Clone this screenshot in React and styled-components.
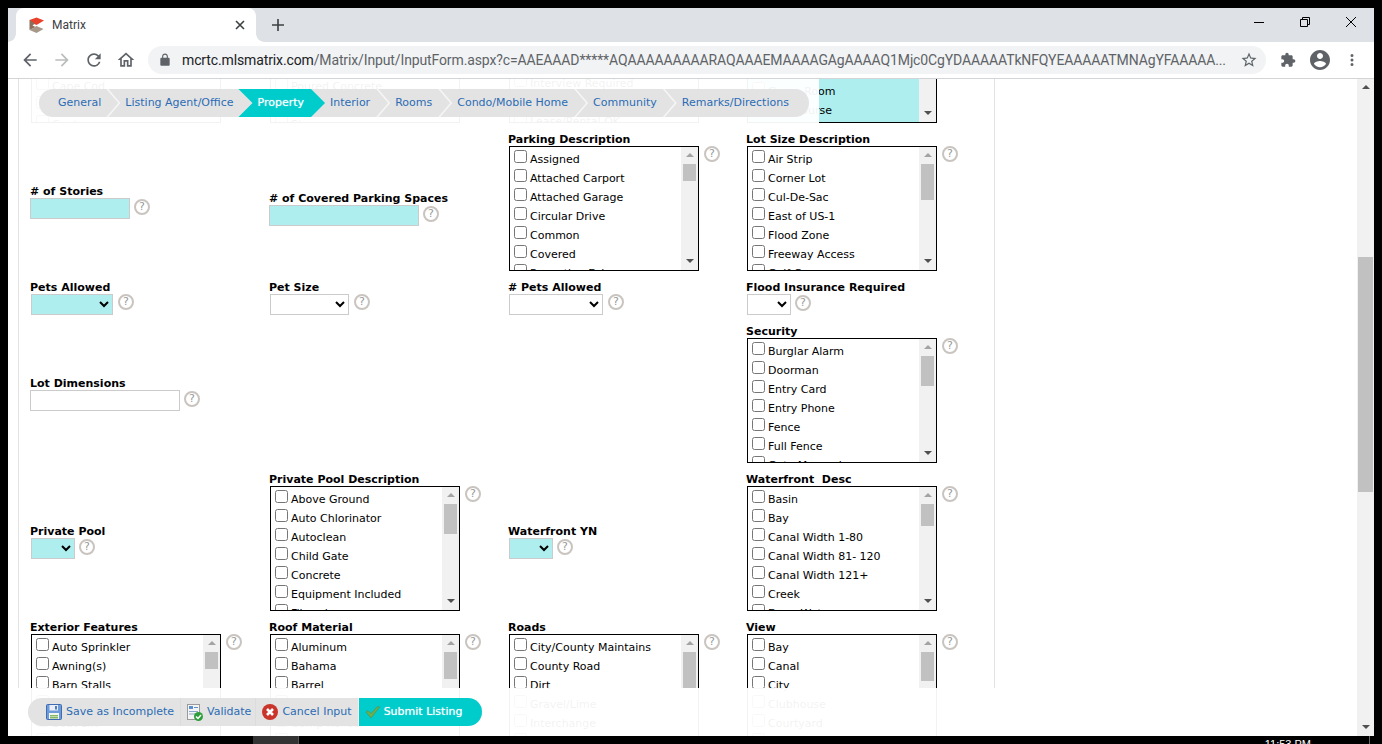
import React from 'react';
import styled, { createGlobalStyle } from 'styled-components';

const GlobalStyle = createGlobalStyle`
  html, body { margin: 0; padding: 0; background: #000; overflow: hidden; }
  * { box-sizing: border-box; }
`;

const Screen = styled.div`
  width: 1382px;
  height: 744px;
  background: #000;
  display: flex;
  flex-direction: column;
  overflow: hidden;
`;

const BrowserWindow = styled.div`
  margin: 8px 8px 0;
  height: 728px;
  display: flex;
  flex-direction: column;
  background: #fff;
`;

// ---- browser chrome ----
const TabStrip = styled.div`
  height: 34px;
  flex: none;
  background: #dee1e6;
  display: flex;
  padding-left: 8px;
`;

const Tab = styled.div`
  position: relative;
  width: 240px;
  background: #fff;
  border-radius: 8px 8px 0 0;
  display: flex;
  align-items: center;
  padding: 0 11px 0 13px;
  font: 12px Roboto, "Liberation Sans", sans-serif;
  color: #3c4043;

  &::before,
  &::after {
    content: '';
    position: absolute;
    bottom: 0;
    width: 8px;
    height: 8px;
  }
  &::before {
    right: 100%;
    background: radial-gradient(circle at 0 0, #dee1e6 7.5px, #fff 8px);
  }
  &::after {
    left: 100%;
    background: radial-gradient(circle at 100% 0, #dee1e6 7.5px, #fff 8px);
  }
`;

const TabTitle = styled.span`
  flex: 1;
  margin-left: 8px;
`;

const NewTab = styled.div`
  width: 28px;
  margin-left: 8px;
  display: flex;
  align-items: center;
  justify-content: center;
`;

const WindowControls = styled.div`
  margin-left: auto;
  display: flex;
`;

const WindowButton = styled.div`
  width: 46px;
  height: 18px;
  padding-top: 9px;
  display: flex;
  justify-content: center;
`;

const Toolbar = styled.div`
  height: 37px;
  flex: none;
  background: #fff;
  border-bottom: 1px solid #d3d4d6;
  display: flex;
  align-items: flex-start;
  padding: 4px 6px 0;
`;

const ToolIcon = styled.div`
  width: 32px;
  height: 28px;
  flex: none;
  display: flex;
  align-items: center;
  justify-content: center;
`;

const Omnibox = styled.div`
  flex: 1;
  min-width: 0;
  height: 28px;
  margin: 0 6px;
  background: #f1f3f4;
  border-radius: 14px;
  display: flex;
  align-items: center;
  padding: 0 8px 0 10px;
  font: 14px Roboto, "Liberation Sans", sans-serif;
  color: #5f6368;
  white-space: nowrap;
`;

const UrlText = styled.div`
  flex: 1;
  min-width: 0;
  margin-left: 10px;
  overflow: hidden;
  letter-spacing: -0.125px;
`;

const UrlHost = styled.span`
  color: #202124;
`;

// ---- page ----
const Content = styled.div`
  flex: 1;
  min-height: 0;
  display: flex;
`;

const PageArea = styled.div`
  position: relative;
  flex: 1;
  overflow: hidden;
  background: #fff;
`;

const PageScrollbar = styled.div`
  width: 17px;
  flex: none;
  background: #f1f1f1;
  display: flex;
  flex-direction: column;
  align-items: center;
  padding: 6px 0 7px;
`;

const PageThumb = styled.div`
  width: 15px;
  height: 235px;
  margin-top: 168px;
  margin-bottom: auto;
  background: #c1c1c1;
`;

const Arrow = styled.div`
  width: 0;
  height: 0;
  flex: none;
  border-left: 4px solid transparent;
  border-right: 4px solid transparent;
  ${(p) => (p.$down
    ? `border-top: 4px solid ${p.$color || '#505050'};`
    : `border-bottom: 4px solid ${p.$color || '#505050'};`)}
`;

const FormPanel = styled.div`
  width: 977px;
  margin: -94px 0 0 10px;
  border-left: 1px solid #e2e2e2;
  border-right: 1px solid #e2e2e2;
  padding-left: 11px;
  font: 11px "DejaVu Sans", Verdana, sans-serif;
  color: #000;
`;

const FormGrid = styled.div`
  display: grid;
  grid-template-columns: 239px 239px 238px 239px;
  row-gap: 10px;
  align-items: center;
`;

const Field = styled.div`
  display: flex;
  flex-direction: column;
  margin-top: ${(p) => p.$drop || 0}px;
`;

const Label = styled.div`
  font-weight: bold;
  line-height: 13px;
  height: 13px;
  white-space: nowrap;
`;

const ControlRow = styled.div`
  display: flex;
  align-items: flex-start;
  gap: ${(p) => p.$gap || 5}px;
`;

const Help = styled.span`
  flex: none;
  width: 16px;
  height: 16px;
  margin-top: ${(p) => p.$top || 0}px;
  border: 2px solid #c9c4bf;
  border-radius: 50%;
  color: #999;
  font: 11px/12px "DejaVu Sans", sans-serif;
  text-align: center;
`;

const TextInput = styled.input`
  width: ${(p) => p.$width}px;
  height: 21px;
  padding: 0;
  border: 1px solid #cbcbcb;
  background: ${(p) => (p.$required ? '#afeeee' : '#fff')};
`;

const Select = styled.select`
  width: ${(p) => p.$width}px;
  height: 21px;
  margin-left: 1px;
  border: 1px solid #cbcbcb;
  border-radius: 0;
  background-color: ${(p) => (p.$required ? '#afeeee' : '#fff')};
  font: 11px "DejaVu Sans", sans-serif;
`;

const ListBox = styled.div`
  width: 190px;
  height: 125px;
  margin-left: 1px;
  border: 1px solid #000;
  display: flex;
  overflow: hidden;
  background: ${(p) => (p.$required ? '#afeeee' : '#fff')};
`;

const ListBody = styled.div`
  flex: 1;
  min-width: 0;
  padding-top: 3px;
  margin-top: ${(p) => -(p.$scroll || 0)}px;
`;

const ListItem = styled.label`
  display: flex;
  align-items: flex-start;
  height: 19px;
  line-height: 19px;
  white-space: nowrap;
`;

const Check = styled.input.attrs({ type: 'checkbox' })`
  width: 13px;
  height: 13px;
  margin: 0 3px 0 4px;
  flex: none;
`;

const ListScroll = styled.div`
  width: 17px;
  flex: none;
  background: #f1f1f1;
  display: flex;
  flex-direction: column;
  align-items: center;
  padding: 6px 0 7px;
`;

const ListThumb = styled.div`
  width: 13px;
  height: ${(p) => p.$size}px;
  margin-top: ${(p) => (p.$low ? 'auto' : '7px')};
  margin-bottom: auto;
  background: #c1c1c1;
`;

// ---- floating bars ----
const TopFade = styled.div`
  position: absolute;
  top: 0;
  left: 11px;
  width: 800px;
  height: 44px;
  padding: 10px 0 0 20px;
  background: rgba(255, 255, 255, 0.95);
`;

const NavPill = styled.div`
  display: inline-flex;
  height: 28px;
  background: #e3e3e3;
  border-radius: 14px;
  font: 11px/28px "DejaVu Sans", Verdana, sans-serif;
`;

const navRightPad = (p) => {
  if (p.$first || p.$beforeActive) return 19;
  return p.$active ? 21 : 20;
};

const NavItem = styled.div`
  position: relative;
  padding: 0 ${navRightPad}px 0 ${(p) => (p.$first ? 19 : 5)}px;
  color: ${(p) => (p.$active ? '#fff' : '#2b6cb5')};
  white-space: nowrap;
  ${(p) => p.$active && 'text-shadow: 0 0 1px rgba(255, 255, 255, 0.7);'}

  &::after {
    content: '';
    position: absolute;
    top: 0;
    bottom: 0;
    display: ${(p) => (p.$last || p.$beforeActive ? 'none' : 'block')};
    ${(p) => (p.$active
    ? `left: -14px; right: 0; z-index: 0; background: #00cccc;
       clip-path: polygon(0 0, calc(100% - 14px) 0, 100% 50%, calc(100% - 14px) 100%, 0 100%, 14px 50%);`
    : `right: 0; width: 14px; background: #f6f6f6;
       clip-path: polygon(0 0, 2px 0, 100% 50%, 2px 100%, 0 100%, calc(100% - 2px) 50%);`)}
  }
`;

const NavText = styled.span`
  position: relative;
  z-index: 1;
`;

const BottomFade = styled.div`
  position: absolute;
  left: 0;
  right: 0;
  bottom: 0;
  height: 48px;
  padding: 10px 0 0 20px;
  background: rgba(255, 255, 255, 0.95);
`;

const ActionPill = styled.div`
  display: inline-flex;
  height: 28px;
  background: #e3e3e3;
  border-radius: 14px;
  font: 11px/28px "DejaVu Sans", Verdana, sans-serif;
`;

const Action = styled.div`
  display: flex;
  align-items: center;
  gap: 4px;
  padding: 0 ${(p) => p.$right || 6}px 0 ${(p) => p.$left || 6}px;
  color: #2b6cb5;
  white-space: nowrap;
  border-right: ${(p) => (p.$plain ? 'none' : '1px solid #dcdcdc')};
`;

const SubmitAction = styled.div`
  display: flex;
  align-items: center;
  gap: 4px;
  margin-left: 1px;
  padding: 0 20px 0 6px;
  border-radius: 0 14px 14px 0;
  background: #00cccc;
  box-shadow: -1px 0 0 #fff;
  color: #fff;
  white-space: nowrap;
  text-shadow: 0 0 1px rgba(255, 255, 255, 0.7);
`;

// ---- taskbar strip at the very bottom ----
const Taskbar = styled.div`
  height: 8px;
  flex: none;
  display: flex;
  background: #000;
  overflow: hidden;
`;

const TaskApp = styled.div`
  width: 46px;
  margin-left: 253px;
  background: #333;
  border-right: 1px solid #555;
`;

const Clock = styled.div`
  margin-left: auto;
  margin-right: 12px;
  padding: 2px 58px 0 0;
  font: 11px/13px "Liberation Sans", sans-serif;
  color: #fff;
  white-space: nowrap;
  border-right: 1px solid #666;
`;

const Mat = ({ d, size = 24, fill = '#5f6368' }) => (
  <svg width={size} height={size} viewBox="0 0 24 24" fill={fill}>
    <path d={d} />
  </svg>
);

const ICONS = {
  back: 'M20 11H7.83l5.59-5.59L12 4l-8 8 8 8 1.41-1.41L7.83 13H20v-2z',
  forward: 'M12 4l-1.41 1.41L16.17 11H4v2h12.17l-5.58 5.59L12 20l8-8z',
  reload: 'M17.65 6.35A7.958 7.958 0 0012 4c-4.42 0-7.99 3.58-7.99 8s3.57 8 7.99 8c3.73 0 6.84-2.55 7.73-6h-2.08A5.99 5.99 0 0112 18c-3.31 0-6-2.69-6-6s2.69-6 6-6c1.66 0 3.14.69 4.22 1.78L13 11h7V4l-2.35 2.35z',
  home: 'M12 5.69l5 4.5V18h-2v-6H9v6H7v-7.81l5-4.5M12 3L2 12h3v8h6v-6h2v6h6v-8h3L12 3z',
  lock: 'M18 8h-1V6c0-2.76-2.24-5-5-5S7 3.24 7 6v2H6c-1.1 0-2 .9-2 2v10c0 1.1.9 2 2 2h12c1.1 0 2-.9 2-2V10c0-1.1-.9-2-2-2zM9 6c0-1.66 1.34-3 3-3s3 1.34 3 3v2H9V6z',
  star: 'M22 9.24l-7.19-.62L12 2 9.19 8.63 2 9.24l5.46 4.73L5.82 21 12 17.27 18.18 21l-1.63-7.03L22 9.24zM12 15.4l-3.76 2.27 1-4.28-3.32-2.88 4.38-.38L12 6.1l1.71 4.04 4.38.38-3.32 2.88 1 4.28L12 15.4z',
  extension: 'M20.5 11H19V7c0-1.1-.9-2-2-2h-4V3.5C13 2.12 11.88 1 10.5 1S8 2.12 8 3.5V5H4c-1.1 0-1.99.9-1.99 2v3.8H3.5c1.49 0 2.7 1.21 2.7 2.7s-1.21 2.7-2.7 2.7H2V20c0 1.1.9 2 2 2h3.8v-1.5c0-1.49 1.21-2.7 2.7-2.7 1.49 0 2.7 1.21 2.7 2.7V22H17c1.1 0 2-.9 2-2v-4h1.5c1.38 0 2.5-1.12 2.5-2.5S21.88 11 20.5 11z',
  profile: 'M12 2C6.48 2 2 6.48 2 12s4.48 10 10 10 10-4.48 10-10S17.52 2 12 2zm0 3c1.66 0 3 1.34 3 3s-1.34 3-3 3-3-1.34-3-3 1.34-3 3-3zm0 14.2c-2.5 0-4.71-1.28-6-3.22.03-1.99 4-3.08 6-3.08 1.99 0 5.97 1.09 6 3.08-1.29 1.94-3.5 3.22-6 3.22z',
  dots: 'M12 8a2 2 0 100-4 2 2 0 000 4zm0 2a2 2 0 100 4 2 2 0 000-4zm0 6a2 2 0 100 4 2 2 0 000-4z',
};

const Favicon = () => (
  <svg width="15" height="16" viewBox="0 0 15 16">
    <path d="M7.5 0.5L15 3.5 7.5 8 2 5.5 0.5 3z" fill="#e8412c" />
    <path d="M0.5 3L6 6.5 3.5 8.5 6.5 10 0.5 13z" fill="#8a6f5c" />
    <path d="M0.5 13L7.5 9 14.5 12 7.5 16z" fill="#a8988a" />
  </svg>
);

const SaveIcon = () => (
  <svg width="16" height="16" viewBox="0 0 16 16">
    <rect x="0.5" y="0.5" width="15" height="15" rx="1" fill="#6d9ad8" stroke="#3f6cb0" />
    <rect x="3.5" y="1" width="8.5" height="5.5" fill="#e9eef6" />
    <rect x="9" y="2" width="2" height="3.5" fill="#4e7cc0" />
    <rect x="3" y="9" width="10" height="6" fill="#f4f7ec" />
    <rect x="4" y="11" width="8" height="1.5" fill="#86b86a" />
    <rect x="4" y="13" width="8" height="1.5" fill="#86b86a" />
  </svg>
);

const ValidateIcon = () => (
  <svg width="16" height="17" viewBox="0 0 16 17">
    <rect x="0.5" y="0.5" width="12" height="15" fill="#f5f5f5" stroke="#9a9a9a" />
    <rect x="2" y="2" width="4" height="3" fill="#5b8fd0" />
    <rect x="7" y="3" width="4" height="1" fill="#5b8fd0" />
    <rect x="2" y="7" width="9" height="1" fill="#8aa6c8" />
    <rect x="2" y="9.5" width="6" height="1" fill="#8aa6c8" />
    <circle cx="11.5" cy="12.5" r="4.5" fill="#2e9e3a" />
    <path d="M9 12.5l2 2 3-3.5" fill="none" stroke="#fff" strokeWidth="1.5" />
  </svg>
);

const CancelIcon = () => (
  <svg width="16" height="16" viewBox="0 0 16 16">
    <circle cx="8" cy="8" r="8" fill="#c9352b" />
    <path d="M5 5l6 6M11 5l-6 6" stroke="#fff" strokeWidth="2.6" />
  </svg>
);

const SubmitIcon = () => (
  <svg width="15" height="14" viewBox="0 0 15 14">
    <path d="M1 7l2-1.5 3 3L13 1l1.5 1L6 13z" fill="#6fb04a" stroke="#4f8a52" strokeWidth="0.6" />
  </svg>
);

const List = ({ items, thumb, scroll, low, required }) => (
  <ListBox $required={required}>
    <ListBody $scroll={scroll}>
      {items.map((name) => (
        <ListItem key={name}>
          <Check />
          {name}
        </ListItem>
      ))}
    </ListBody>
    <ListScroll>
      <Arrow $color="#a3a3a3" />
      <ListThumb $size={thumb} $low={low} />
      <Arrow $down />
    </ListScroll>
  </ListBox>
);

const ListField = ({ label, ...rest }) => (
  <Field>
    <Label>{label}</Label>
    <ControlRow>
      <List {...rest} />
      <Help>?</Help>
    </ControlRow>
  </Field>
);

const InputField = ({ label, width, required, drop }) => (
  <Field $drop={drop}>
    <Label>{label}</Label>
    <ControlRow $gap={4}>
      <TextInput $width={width} $required={required} />
      <Help $top={1}>?</Help>
    </ControlRow>
  </Field>
);

const SelectField = ({ label, width, required, narrow }) => (
  <Field>
    <Label>{label}</Label>
    <ControlRow $gap={narrow ? 4 : 5}>
      <Select $width={width} $required={required}><option /></Select>
      <Help $top={narrow ? 1 : 0}>?</Help>
    </ControlRow>
  </Field>
);

const EmptyCell = styled.div``;

const NAV = ['General', 'Listing Agent/Office', 'Property', 'Interior', 'Rooms', 'Condo/Mobile Home', 'Community', 'Remarks/Directions'];

export default function App() {
  return (
    <Screen>
      <GlobalStyle />
      <BrowserWindow>
        <TabStrip>
          <Tab>
            <Favicon />
            <TabTitle>Matrix</TabTitle>
            <svg width="10" height="10" viewBox="0 0 10 10">
              <path d="M1 1l8 8M9 1l-8 8" stroke="#3c4043" strokeWidth="1.6" />
            </svg>
          </Tab>
          <NewTab>
            <svg width="12" height="12" viewBox="0 0 12 12">
              <path d="M6 0v12M0 6h12" stroke="#3c4043" strokeWidth="1.6" />
            </svg>
          </NewTab>
          <WindowControls>
            <WindowButton>
              <svg width="10" height="10" viewBox="0 0 10 10"><path d="M0 5.5h10" stroke="#000" /></svg>
            </WindowButton>
            <WindowButton>
              <svg width="10" height="10" viewBox="0 0 10 10">
                <path d="M0.5 2.5h7v7h-7zM2.5 2.5v-2h7v7h-2" fill="none" stroke="#000" />
              </svg>
            </WindowButton>
            <WindowButton>
              <svg width="10" height="10" viewBox="0 0 10 10"><path d="M0 0l10 10M10 0l-10 10" stroke="#000" /></svg>
            </WindowButton>
          </WindowControls>
        </TabStrip>

        <Toolbar>
          <ToolIcon><Mat d={ICONS.back} size={20} /></ToolIcon>
          <ToolIcon><Mat d={ICONS.forward} size={20} fill="#babcbe" /></ToolIcon>
          <ToolIcon><Mat d={ICONS.reload} size={20} /></ToolIcon>
          <ToolIcon><Mat d={ICONS.home} size={20} /></ToolIcon>
          <Omnibox>
            <Mat d={ICONS.lock} size={14} />
            <UrlText>
              <UrlHost>mcrtc.mlsmatrix.com</UrlHost>/Matrix/Input/InputForm.aspx?c=AAEAAAD*****AQAAAAAAAAARAQAAAEMAAAAGAgAAAAQ1Mjc0CgYDAAAAATkNFQYEAAAAATMNAgYFAAAAA...
            </UrlText>
            <Mat d={ICONS.star} size={18} />
          </Omnibox>
          <ToolIcon><Mat d={ICONS.extension} size={16} /></ToolIcon>
          <ToolIcon><Mat d={ICONS.profile} size={24} /></ToolIcon>
          <ToolIcon><Mat d={ICONS.dots} size={18} /></ToolIcon>
        </Toolbar>

        <Content>
          <PageArea>
            <FormPanel>
              <FormGrid>
                <ListField label="Style" thumb={20} scroll={20} items={['Art Deco', 'Bungalow', 'Cabana', 'Cape', 'Carriage', 'Cape Cod', 'Colonial', 'Contemporary']} />
                <ListField label="Construction" thumb={20} scroll={20} items={['Block', 'Brick', 'Frame', 'Metal', 'Piling', 'Poured Concrete', 'Slab', 'Stucco']} />
                <ListField label="Lease Terms" thumb={20} scroll={23} items={['Annual', 'Association', 'Credit Check', 'First Last', 'Income', 'Interview Required', 'Lease Option', 'Lease/Rental OK']} />
                <ListField label="Amenities" thumb={20} low required scroll={15} items={['Bar', 'Beach', 'Cabana', 'Clubhouse', 'Fitness', 'Game Room', 'Golf Course']} />

                <InputField label="# of Stories" width={100} required />
                <InputField label="# of Covered Parking Spaces" width={150} required drop={14} />
                <ListField label="Parking Description" thumb={17} items={['Assigned', 'Attached Carport', 'Attached Garage', 'Circular Drive', 'Common', 'Covered', 'Reception Drive']} />
                <ListField label="Lot Size Description" thumb={36} items={['Air Strip', 'Corner Lot', 'Cul-De-Sac', 'East of US-1', 'Flood Zone', 'Freeway Access', 'Golf Course']} />

                <SelectField label="Pets Allowed" width={82} required />
                <SelectField label="Pet Size" width={79} />
                <SelectField label="# Pets Allowed" width={94} />
                <SelectField label="Flood Insurance Required" width={44} narrow />

                <InputField label="Lot Dimensions" width={150} />
                <EmptyCell />
                <EmptyCell />
                <ListField label="Security" thumb={30} items={['Burglar Alarm', 'Doorman', 'Entry Card', 'Entry Phone', 'Fence', 'Full Fence', 'Gate Manned']} />

                <SelectField label="Private Pool" width={44} required narrow />
                <ListField label="Private Pool Description" thumb={30} items={['Above Ground', 'Auto Chlorinator', 'Autoclean', 'Child Gate', 'Concrete', 'Equipment Included', 'Fiberglass']} />
                <SelectField label="Waterfront YN" width={44} required narrow />
                <ListField label={'Waterfront\u00a0 Desc'} thumb={22} items={['Basin', 'Bay', 'Canal Width 1-80', 'Canal Width 81- 120', 'Canal Width 121+', 'Creek', 'Deep Water']} />

                <ListField label="Exterior Features" thumb={17} items={['Auto Sprinkler', 'Awning(s)', 'Barn Stalls', 'Built-In Grill', 'Boat Lift', 'Deck']} />
                <ListField label="Roof Material" thumb={27} items={['Aluminum', 'Bahama', 'Barrel', 'Built-Up', 'Comp Rolled', 'Concrete']} />
                <ListField label="Roads" thumb={36} items={['City/County Maintains', 'County Road', 'Dirt', 'Gravel/Lime', 'Interchange', 'Paved']} />
                <ListField label="View" thumb={29} items={['Bay', 'Canal', 'City', 'Clubhouse', 'Courtyard', 'Garden']} />
              </FormGrid>
            </FormPanel>

            <TopFade>
              <NavPill>
                {NAV.map((name, i) => (
                  <NavItem
                    key={name}
                    $first={i === 0}
                    $active={name === 'Property'}
                    $beforeActive={name === 'Listing Agent/Office'}
                    $last={i === NAV.length - 1}
                  >
                    <NavText>{name}</NavText>
                  </NavItem>
                ))}
              </NavPill>
            </TopFade>

            <BottomFade>
              <ActionPill>
                <Action $left={18}><SaveIcon />Save as Incomplete</Action>
                <Action $right={4}><ValidateIcon />Validate</Action>
                <Action $plain><CancelIcon />Cancel Input</Action>
                <SubmitAction><SubmitIcon />Submit Listing</SubmitAction>
              </ActionPill>
            </BottomFade>
          </PageArea>
          <PageScrollbar>
            <Arrow />
            <PageThumb />
            <Arrow $down />
          </PageScrollbar>
        </Content>
      </BrowserWindow>
      <Taskbar>
        <TaskApp />
        <Clock>11:53 PM</Clock>
      </Taskbar>
    </Screen>
  );
}
